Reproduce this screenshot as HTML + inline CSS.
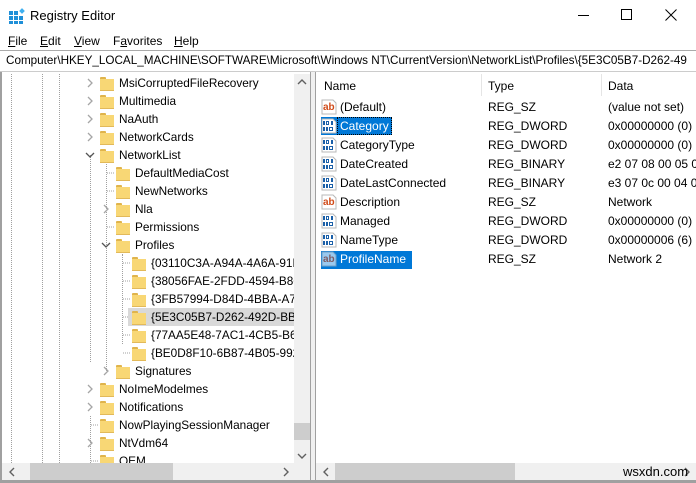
<!DOCTYPE html>
<html><head><meta charset="utf-8"><style>
*{margin:0;padding:0;box-sizing:border-box}
body{width:696px;height:483px;overflow:hidden;background:#fff;font-family:"Liberation Sans",Arial,sans-serif;font-size:12px;color:#000;position:relative}
.a{position:absolute;white-space:nowrap}
.f{position:absolute;width:14px;height:14px}
.f:before{content:"";position:absolute;left:0;top:1px;width:6px;height:3px;background:#e0b44c;border-radius:1px 1px 0 0}
.f:after{content:"";position:absolute;left:0;top:3px;width:14px;height:11px;background:#f8d775;border-bottom:1px solid #e2b95a}
.t{position:absolute;line-height:18px;height:18px;white-space:nowrap}
.dv{position:absolute;border-left:1px dotted #a0a0a0;width:0}
</style></head><body>
<!-- title bar -->
<svg class="a" style="left:9px;top:8px" width="16" height="16"><g fill="#1e8fd8"><rect x="0" y="3" width="4" height="4"/><rect x="5" y="3" width="4" height="4"/><rect x="0" y="8" width="4" height="4"/><rect x="5" y="8" width="4" height="4"/><rect x="10" y="8" width="4" height="4"/><rect x="0" y="13" width="4" height="3"/><rect x="5" y="13" width="4" height="3"/><rect x="10" y="13" width="4" height="3"/></g><rect x="11" y="1" width="4" height="4" fill="#3fb0f0" transform="rotate(45 13 3)"/></svg>
<div class="a" style="left:30px;top:8px;font-size:13px">Registry Editor</div>
<div class="a" style="left:578px;top:15px;width:11px;height:1px;background:#000"></div>
<div class="a" style="left:621px;top:9px;width:11px;height:11px;border:1px solid #000"></div>
<svg class="a" style="left:665px;top:9px" width="12" height="12"><path d="M0.5 0.5L11.5 11.5M11.5 0.5L0.5 11.5" stroke="#000" stroke-width="1"/></svg>
<!-- menu -->
<div class="a" style="left:8px;top:34px"><u>F</u>ile</div>
<div class="a" style="left:40px;top:34px"><u>E</u>dit</div>
<div class="a" style="left:74px;top:34px"><u>V</u>iew</div>
<div class="a" style="left:113px;top:34px">F<u>a</u>vorites</div>
<div class="a" style="left:174px;top:34px"><u>H</u>elp</div>
<!-- address -->
<div class="a" style="left:0;top:50px;width:696px;height:22px;border-top:1px solid #aaa;border-bottom:1px solid #ccc;overflow:hidden"><div class="a" style="left:6px;top:3px;font-size:11.7px">Computer\HKEY_LOCAL_MACHINE\SOFTWARE\Microsoft\Windows NT\CurrentVersion\NetworkList\Profiles\{5E3C05B7-D262-49</div></div>
<!-- left pane -->
<div class="a" style="left:0;top:72px;width:2px;height:411px;background:#a0a0a0"></div>
<div class="a" style="left:310px;top:72px;width:6px;height:411px;background:#f0f0f0;border-left:1px solid #a0a0a0;border-right:1px solid #a0a0a0"></div>
<div class="a" style="left:0;top:480px;width:696px;height:3px;background:#a0a0a0"></div>
<div class="dv" style="left:11px;top:74px;height:389px"></div>
<div class="dv" style="left:42px;top:74px;height:389px"></div>
<div class="dv" style="left:59px;top:74px;height:389px"></div>
<div class="dv" style="left:90px;top:155px;height:207px"></div>
<div class="dv" style="left:90px;top:416px;height:47px"></div>
<div class="dv" style="left:106px;top:164px;height:207px"></div>
<div class="dv" style="left:122px;top:254px;height:90px"></div>
<svg class="a" style="left:0;top:74px" width="300" height="389"><g fill="none" stroke="#a6a6a6" stroke-width="1.3">
<path d="M88 5l4 4-4 4"/><path d="M88 23l4 4-4 4"/><path d="M88 41l4 4-4 4"/><path d="M88 59l4 4-4 4"/>
<path d="M86 79l4 4 4-4" stroke="#555"/>
<path d="M104 131l4 4-4 4"/><path d="M102 169l4 4 4-4" stroke="#555"/>
<path d="M104 293l4 4-4 4"/><path d="M88 311l4 4-4 4"/><path d="M88 329l4 4-4 4"/><path d="M88 365l4 4-4 4"/>
</g><g stroke="#a0a0a0" stroke-dasharray="1 1"><path d="M107 99h7M107 117h7M107 153h7M123 189h7M123 207h7M123 225h7M123 243h7M123 261h7M123 279h7M91 351h7M91 387h7"/></g></svg>
<div class="a" style="left:128px;top:308px;width:166px;height:18px;background:#d9d9d9"></div>
<div class="a" style="left:0;top:74px;width:294px;height:389px;overflow:hidden;font-size:11.8px">
<div class="f" style="left:100px;top:2px"></div><div class="t" style="left:119px;top:0px">MsiCorruptedFileRecovery</div>
<div class="f" style="left:100px;top:20px"></div><div class="t" style="left:119px;top:18px">Multimedia</div>
<div class="f" style="left:100px;top:38px"></div><div class="t" style="left:119px;top:36px">NaAuth</div>
<div class="f" style="left:100px;top:56px"></div><div class="t" style="left:119px;top:54px">NetworkCards</div>
<div class="f" style="left:100px;top:74px"></div><div class="t" style="left:119px;top:72px">NetworkList</div>
<div class="f" style="left:116px;top:92px"></div><div class="t" style="left:135px;top:90px">DefaultMediaCost</div>
<div class="f" style="left:116px;top:110px"></div><div class="t" style="left:135px;top:108px">NewNetworks</div>
<div class="f" style="left:116px;top:128px"></div><div class="t" style="left:135px;top:126px">Nla</div>
<div class="f" style="left:116px;top:146px"></div><div class="t" style="left:135px;top:144px">Permissions</div>
<div class="f" style="left:116px;top:164px"></div><div class="t" style="left:135px;top:162px">Profiles</div>
<div class="f" style="left:132px;top:182px"></div><div class="t" style="left:151px;top:180px">{03110C3A-A94A-4A6A-91E</div>
<div class="f" style="left:132px;top:200px"></div><div class="t" style="left:151px;top:198px">{38056FAE-2FDD-4594-B86C</div>
<div class="f" style="left:132px;top:218px"></div><div class="t" style="left:151px;top:216px">{3FB57994-D84D-4BBA-A7A</div>
<div class="f" style="left:132px;top:236px"></div><div class="t" style="left:151px;top:234px">{5E3C05B7-D262-492D-BB4</div>
<div class="f" style="left:132px;top:254px"></div><div class="t" style="left:151px;top:252px">{77AA5E48-7AC1-4CB5-B62</div>
<div class="f" style="left:132px;top:272px"></div><div class="t" style="left:151px;top:270px">{BE0D8F10-6B87-4B05-9925</div>
<div class="f" style="left:116px;top:290px"></div><div class="t" style="left:135px;top:288px">Signatures</div>
<div class="f" style="left:100px;top:308px"></div><div class="t" style="left:119px;top:306px">NoImeModelmes</div>
<div class="f" style="left:100px;top:326px"></div><div class="t" style="left:119px;top:324px">Notifications</div>
<div class="f" style="left:100px;top:344px"></div><div class="t" style="left:119px;top:342px">NowPlayingSessionManager</div>
<div class="f" style="left:100px;top:362px"></div><div class="t" style="left:119px;top:360px">NtVdm64</div>
<div class="f" style="left:100px;top:380px"></div><div class="t" style="left:119px;top:378px">OEM</div>
</div>
<div class="a" style="left:294px;top:74px;width:16px;height:389px;background:#f0f0f0"></div>
<div class="a" style="left:294px;top:423px;width:16px;height:17px;background:#cdcdcd"></div>
<svg class="a" style="left:294px;top:74px" width="16" height="389"><path d="M4 10l4-4 4 4M4 380l4 4 4-4" fill="none" stroke="#606060" stroke-width="1.4"/></svg>
<div class="a" style="left:2px;top:463px;width:308px;height:17px;background:#f0f0f0"></div>
<div class="a" style="left:30px;top:463px;width:143px;height:17px;background:#cdcdcd"></div>
<svg class="a" style="left:2px;top:463px" width="308" height="17"><path d="M12 5l-4 4 4 4M282 5l4 4-4 4" fill="none" stroke="#606060" stroke-width="1.4"/></svg>
<!-- right pane -->
<div class="a" style="left:324px;top:79px">Name</div>
<div class="a" style="left:481px;top:74px;width:1px;height:22px;background:#e5e5e5"></div>
<div class="a" style="left:488px;top:79px">Type</div>
<div class="a" style="left:601px;top:74px;width:1px;height:22px;background:#e5e5e5"></div>
<div class="a" style="left:608px;top:79px">Data</div>
<svg class="a" style="left:321px;top:99px" width="16" height="175">
<defs><g id="ab"><path d="M1 1h11l3 3v11H1z" fill="#fff" stroke="#b8b8b8"/><text x="2" y="11" font-family="Liberation Sans" font-size="10" font-weight="bold" fill="#d04a18">ab</text></g>
<g id="bn"><path d="M1 1h11l3 3v11H1z" fill="#fff" stroke="#b8b8b8"/><g fill="#1a5fa8"><rect x="2" y="3" width="2" height="4"/><rect x="5.5" y="3.5" width="2" height="3" fill="none" stroke="#1a5fa8"/><rect x="10" y="3" width="2" height="4"/><rect x="2" y="9" width="2" height="4"/><rect x="5" y="9" width="2" height="4"/><rect x="8.5" y="9.5" width="3" height="3" fill="none" stroke="#1a5fa8"/></g></g></defs>
<use href="#ab" y="0"/><rect x="0" y="18" width="16" height="18" fill="#0078d7"/><use href="#bn" y="19"/><use href="#bn" y="38"/><use href="#bn" y="57"/><use href="#bn" y="76"/><use href="#ab" y="95"/><use href="#bn" y="114"/><use href="#bn" y="133"/><rect x="0" y="152" width="16" height="18" fill="#0078d7"/><use href="#ab" y="152" opacity="0.6"/>
</svg>
<div class="a" style="left:337px;top:117px;width:55px;height:18px;background:#0078d7;border:1px dotted #000"></div>
<div class="a" style="left:337px;top:251px;width:75px;height:18px;background:#0078d7"></div>
<div class="t" style="left:340px;top:98px">(Default)</div><div class="t" style="left:488px;top:98px">REG_SZ</div><div class="t" style="left:608px;top:98px">(value not set)</div>
<div class="t" style="left:340px;top:117px;color:#fff">Category</div><div class="t" style="left:488px;top:117px">REG_DWORD</div><div class="t" style="left:608px;top:117px">0x00000000 (0)</div>
<div class="t" style="left:340px;top:136px">CategoryType</div><div class="t" style="left:488px;top:136px">REG_DWORD</div><div class="t" style="left:608px;top:136px">0x00000000 (0)</div>
<div class="t" style="left:340px;top:155px">DateCreated</div><div class="t" style="left:488px;top:155px">REG_BINARY</div><div class="t" style="left:608px;top:155px">e2 07 08 00 05 00</div>
<div class="t" style="left:340px;top:174px">DateLastConnected</div><div class="t" style="left:488px;top:174px">REG_BINARY</div><div class="t" style="left:608px;top:174px">e3 07 0c 00 04 00</div>
<div class="t" style="left:340px;top:193px">Description</div><div class="t" style="left:488px;top:193px">REG_SZ</div><div class="t" style="left:608px;top:193px">Network</div>
<div class="t" style="left:340px;top:212px">Managed</div><div class="t" style="left:488px;top:212px">REG_DWORD</div><div class="t" style="left:608px;top:212px">0x00000000 (0)</div>
<div class="t" style="left:340px;top:231px">NameType</div><div class="t" style="left:488px;top:231px">REG_DWORD</div><div class="t" style="left:608px;top:231px">0x00000006 (6)</div>
<div class="t" style="left:340px;top:250px;color:#fff">ProfileName</div><div class="t" style="left:488px;top:250px">REG_SZ</div><div class="t" style="left:608px;top:250px">Network 2</div>
<div class="a" style="left:316px;top:463px;width:380px;height:17px;background:#f0f0f0"></div>
<div class="a" style="left:335px;top:463px;width:180px;height:17px;background:#cdcdcd"></div>
<svg class="a" style="left:316px;top:463px" width="380" height="17"><path d="M12 5l-4 4 4 4M369 5l4 4-4 4" fill="none" stroke="#606060" stroke-width="1.4"/></svg>
<div class="a" style="left:623px;top:464px;font-size:13px">wsxdn.com</div>
</body></html>
